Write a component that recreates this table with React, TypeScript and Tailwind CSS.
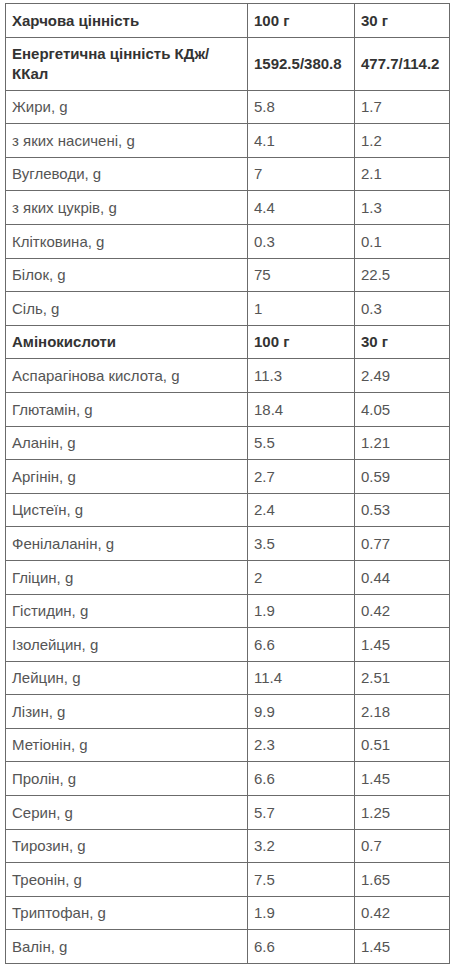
type Row = [string, string, string, boolean?]

const rows: Row[] = [
  ['Харчова цінність', '100 г', '30 г', true],
  ['Енергетична цінність КДж/ ККал', '1592.5/380.8', '477.7/114.2', true],
  ['Жири, g', '5.8', '1.7'],
  ['з яких насичені, g', '4.1', '1.2'],
  ['Вуглеводи, g', '7', '2.1'],
  ['з яких цукрів, g', '4.4', '1.3'],
  ['Клітковина, g', '0.3', '0.1'],
  ['Білок, g', '75', '22.5'],
  ['Сіль, g', '1', '0.3'],
  ['Амінокислоти', '100 г', '30 г', true],
  ['Аспарагінова кислота, g', '11.3', '2.49'],
  ['Глютамін, g', '18.4', '4.05'],
  ['Аланін, g', '5.5', '1.21'],
  ['Аргінін, g', '2.7', '0.59'],
  ['Цистеїн, g', '2.4', '0.53'],
  ['Фенілаланін, g', '3.5', '0.77'],
  ['Гліцин, g', '2', '0.44'],
  ['Гістидин, g', '1.9', '0.42'],
  ['Ізолейцин, g', '6.6', '1.45'],
  ['Лейцин, g', '11.4', '2.51'],
  ['Лізин, g', '9.9', '2.18'],
  ['Метіонін, g', '2.3', '0.51'],
  ['Пролін, g', '6.6', '1.45'],
  ['Серин, g', '5.7', '1.25'],
  ['Тирозин, g', '3.2', '0.7'],
  ['Треонін, g', '7.5', '1.65'],
  ['Триптофан, g', '1.9', '0.42'],
  ['Валін, g', '6.6', '1.45'],
]

const cell = 'border border-[#6b6b6b] px-[6px] py-[6.6px] align-middle'

export default function App() {
  return (
    <div className="min-h-screen bg-white pl-[5px] pt-[3px] font-['Liberation_Sans',Arial,sans-serif] text-[15px] leading-[19.4px]">
      <table className="w-[444px] table-fixed border-collapse">
        <colgroup>
          <col className="w-[242px]" />
          <col className="w-[107px]" />
          <col className="w-[95px]" />
        </colgroup>
        <tbody>
          {rows.map(([name, a, b, bold]) => (
            <tr key={name + a} className={bold ? 'font-bold text-[#333]' : 'text-[#555]'}>
              <td className={cell}>{name}</td>
              <td className={cell}>{a}</td>
              <td className={cell}>{b}</td>
            </tr>
          ))}
        </tbody>
      </table>
    </div>
  )
}
